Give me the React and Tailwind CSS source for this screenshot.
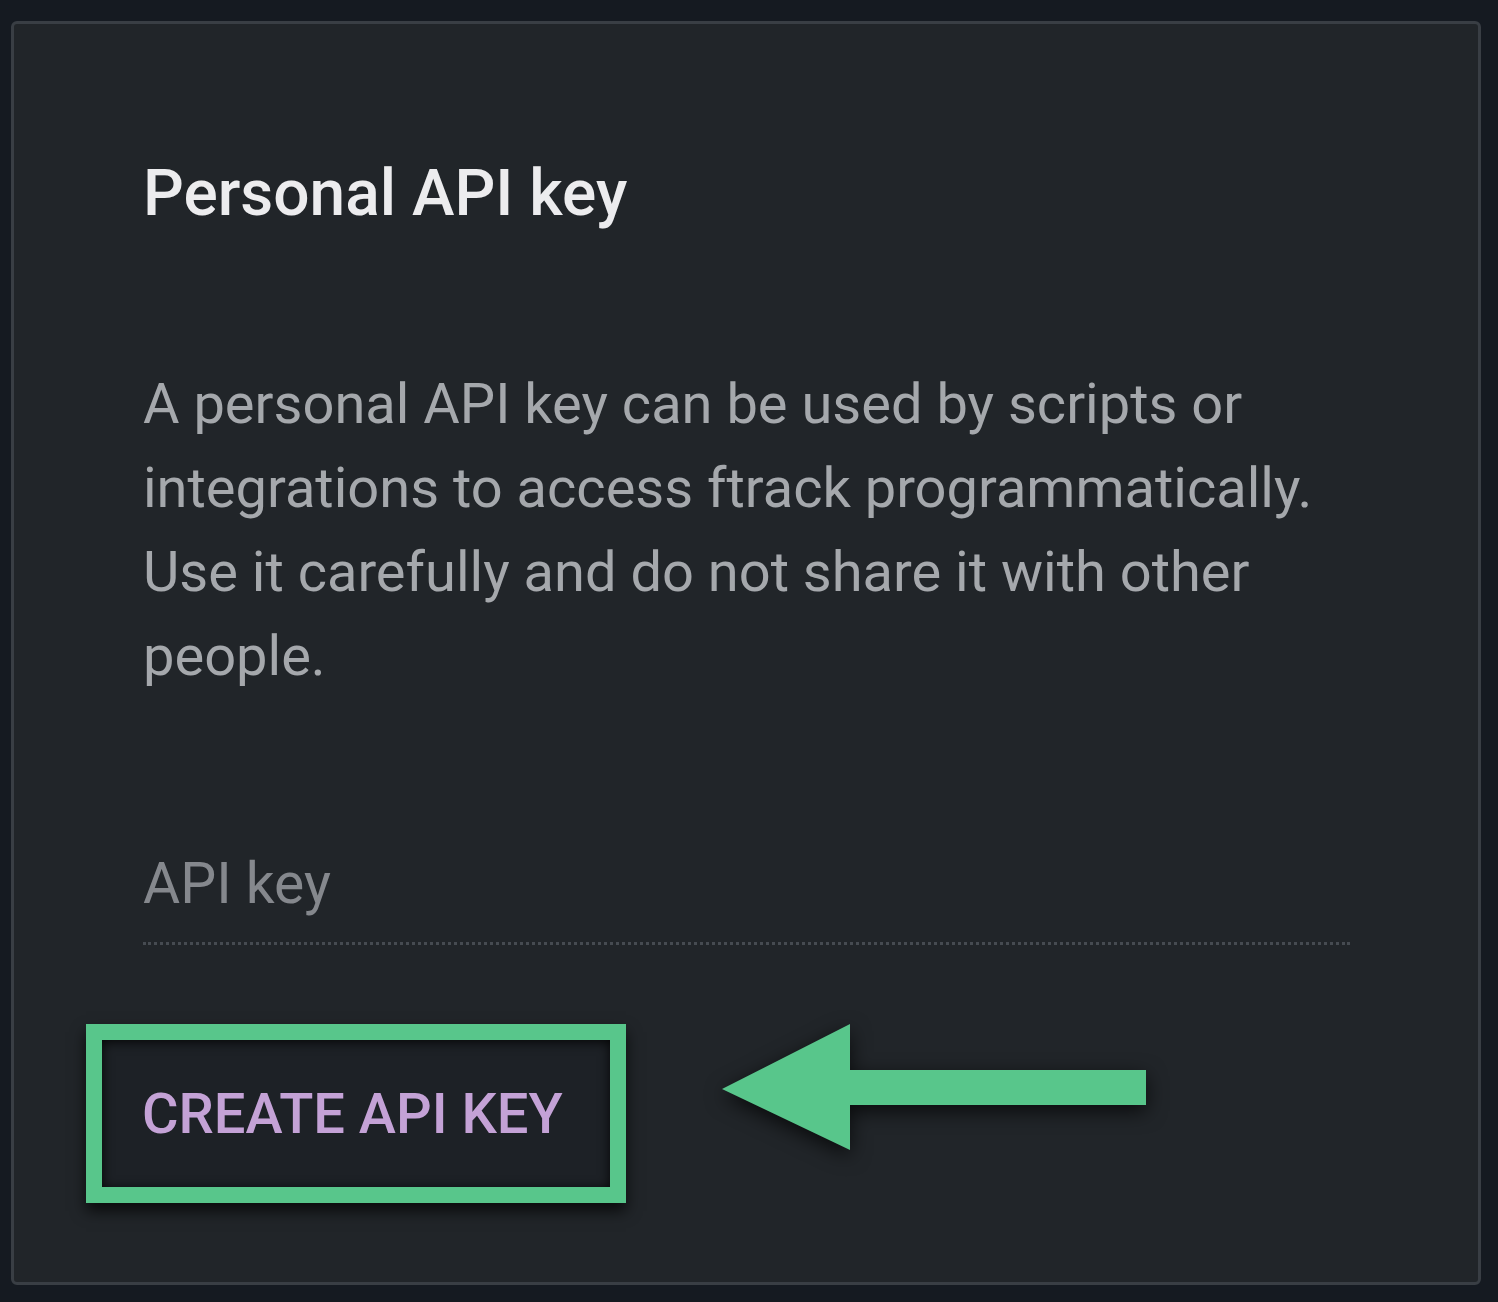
import { useState } from "react";

const FONT = { fontFamily: "Roboto, 'Liberation Sans', sans-serif" };

function ArrowPointer() {
  // annotation arrow pointing at the button
  return (
    <svg
      className="absolute left-[694px] top-[976px] drop-shadow-[0_6px_10px_rgba(0,0,0,0.7)]"
      width="460"
      height="170"
      viewBox="0 0 460 170"
    >
      <path d="M14 89 L142 24 L142 70 L438 70 L438 105 L142 105 L142 150 Z" fill="#58c68b" />
    </svg>
  );
}

export default function App() {
  const [created, setCreated] = useState(false);

  return (
    <div className="min-h-[1302px] w-[1498px] bg-[#151a21] pt-[21px] pl-[11px]" style={FONT}>
      <section className="relative h-[1264px] w-[1470px] rounded-[6px] border-[3px] border-[#393e44] bg-[#212529]">
        <div className="pl-[129px] pr-[128px] pt-[130px]">
          <h2 className="text-[64px] leading-[80px] font-medium text-[#ececee]">Personal API key</h2>

          <p className="mt-[128px] text-[56px] leading-[84px] text-[#a5a8ac]">
            A personal API key can be used by scripts or
            <br />
            integrations to access ftrack programmatically.
            <br />
            Use it carefully and do not share it with other
            <br />
            people.
          </p>

          <div className="mt-[154px]">
            <label className="block text-[57px] leading-[64px] text-[#85888d]">API key</label>
            <div className="mt-[26px] h-0 border-b-[3px] border-dotted border-[#464b51]" />
          </div>

          <button
            type="button"
            onClick={() => setCreated((prev) => !prev)}
            className="-ml-[57px] mt-[79px] flex h-[179px] w-[540px] items-center border-[16px] border-[#58c68b] bg-[#1d2126] pl-[40px] text-left shadow-[0_8px_14px_rgba(0,0,0,0.7),inset_0_2px_12px_rgba(0,0,0,0.85)]"
          >
            <span className="text-[56px] leading-none font-medium text-[#c4a2d6]">
              {created ? "CREATE API KEY" : "CREATE API KEY"}
            </span>
          </button>
        </div>

        <ArrowPointer />
      </section>
    </div>
  );
}
